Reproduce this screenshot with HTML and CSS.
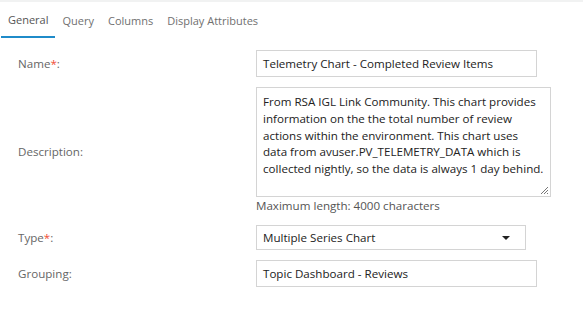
FILE: index.html
```html
<!DOCTYPE html>
<html>
<head>
<meta charset="utf-8">
<link rel="stylesheet" href="styles.css">
</head>
<body>
<div class="topband"></div>
<nav class="tabs">
  <span class="tab active">General</span>
  <span class="tab">Query</span>
  <span class="tab">Columns</span>
  <span class="tab">Display Attributes</span>
</nav>
<form class="form">
  <label class="label">Name<span class="req">*</span>:</label>
  <div class="field"><div class="input w-wide">Telemetry Chart - Completed Review Items</div></div>

  <label class="label">Description:</label>
  <div class="field">
    <div class="textarea">From RSA IGL Link Community. This chart provides information on the the total number of review actions within the environment. This chart uses data from avuser.PV_TELEMETRY_DATA which is collected nightly, so the data is always 1 day behind.<svg class="grip" width="9" height="9" viewBox="0 0 9 9"><path d="M8 1L1 8M8 4L4 8M8 7L7 8" stroke="#777" stroke-width="1" fill="none"/></svg></div>
    <div class="hint">Maximum length: 4000 characters</div>
  </div>

  <label class="label">Type<span class="req">*</span>:</label>
  <div class="field"><div class="select">Multiple Series Chart<span class="caret"></span></div></div>

  <label class="label">Grouping:</label>
  <div class="field"><div class="input w-wide">Topic Dashboard - Reviews</div></div>
</form>
</body>
</html>
```
FILE: styles.css
```css
html, body {
  margin: 0;
  padding: 0;
  background: #fff;
}
body {
  font-family: "Open Sans", "Noto Sans", sans-serif;
  font-size: 11.6px;
  color: #333;
}
.topband {
  height: 2px;
  background: #f1f2f2;
}
.tabs {
  display: flex;
  margin-left: 1px;
  height: 36px;
}
.tab {
  padding: 11px 7px 0;
  color: #707070;
  font-size: 11px;
  box-sizing: border-box;
  height: 36px;
}
.tab.active {
  color: #555;
  padding-top: 10px;
  border-bottom: 2px solid #1f8bc9;
}
.form {
  display: grid;
  grid-template-columns: 256px auto;
  row-gap: 10px;
  padding-top: 12px;
  justify-content: start;
}
.label {
  padding-left: 18px;
  color: #666;
  font-size: 11.6px;
  align-self: center;
}
.req {
  color: #f04e37;
}
.field {
  display: flex;
  flex-direction: column;
  align-items: flex-start;
}
.input, .select, .textarea {
  box-sizing: border-box;
  border: 1px solid #d4d4d4;
  color: #222;
  font-size: 11.6px;
  background: #fff;
}
.input {
  width: 281px;
  height: 27px;
  line-height: 25px;
  padding: 0 6px;
}
.textarea {
  position: relative;
  width: 295px;
  height: 110px;
  padding: 6px 6px 4px;
  line-height: 16.8px;
}
.grip {
  position: absolute;
  right: 1px;
  bottom: 1px;
}
.hint {
  color: #555;
  font-size: 11.6px;
  line-height: 16px;
  margin-top: 1px;
  margin-bottom: 1px;
}
.select {
  width: 270px;
  height: 25px;
  line-height: 23px;
  padding: 0 6px;
  display: flex;
  justify-content: space-between;
  align-items: center;
}
.caret {
  width: 0;
  height: 0;
  border-left: 4px solid transparent;
  border-right: 4px solid transparent;
  border-top: 4px solid #222;
  margin-right: 9px;
}
```
